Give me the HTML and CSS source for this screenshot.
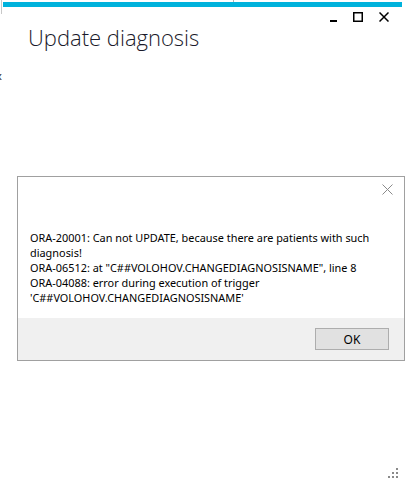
FILE: index.html
```html
<!DOCTYPE html>
<html>
<head>
<meta charset="utf-8">
<link rel="stylesheet" href="styles.css">
</head>
<body>
<div class="window">
  <div class="accent-row"><div class="accent"><span class="tick"></span></div></div>
  <div class="controls">
    <svg class="ctl" width="10" height="10" viewBox="0 0 10 10"><rect x="1" y="8" width="7" height="2" fill="#000"/></svg>
    <svg class="ctl" width="10" height="10" viewBox="0 0 10 10"><rect x="0.75" y="0.75" width="8.5" height="8.5" fill="none" stroke="#000" stroke-width="1.5"/></svg>
    <svg class="ctl" width="10" height="10" viewBox="0 0 10 10"><path d="M0.5 0.5 L9.5 9.5 M9.5 0.5 L0.5 9.5" stroke="#000" stroke-width="1.5"/></svg>
  </div>
  <h1 class="title">Update diagnosis</h1>
  <div class="stray">x</div>
  <div class="dialog">
    <div class="dialog-body">
      <div class="dialog-close">
        <svg width="11" height="11" viewBox="0 0 11 11"><path d="M0.5 0.5 L10.5 10.5 M10.5 0.5 L0.5 10.5" stroke="#8a8a8a" stroke-width="1"/></svg>
      </div>
      <p class="message">ORA-20001: Can not UPDATE, because there are patients with such diagnosis!<br>ORA-06512: at "C##VOLOHOV.CHANGEDIAGNOSISNAME", line 8<br>ORA-04088: error during execution of trigger<br>'C##VOLOHOV.CHANGEDIAGNOSISNAME'</p>
    </div>
    <div class="dialog-footer">
      <button class="btn">OK</button>
    </div>
  </div>
  <div class="grip">
    <svg width="10" height="10" viewBox="0 0 10 10" fill="#8a8a8a">
      <rect x="8" y="0" width="2" height="2"/>
      <rect x="4" y="4" width="2" height="2"/><rect x="8" y="4" width="2" height="2"/>
      <rect x="0" y="8" width="2" height="2"/><rect x="4" y="8" width="2" height="2"/><rect x="8" y="8" width="2" height="2"/>
    </svg>
  </div>
</div>
</body>
</html>
```
FILE: styles.css
```css
html, body {
  margin: 0;
  padding: 0;
  background: #fff;
}
.window {
  height: 487px;
  display: flex;
  flex-direction: column;
  font-family: "Noto Sans", "Open Sans", sans-serif;
}
.accent-row {
  margin-left: 1px;
  padding: 2px 3px 7px 1px;
  border-left: 1px solid #c8c8c8;
}
.accent {
  height: 5px;
  background: #00b2dc;
  position: relative;
}
.tick {
  position: absolute;
  left: 230px;
  top: -2px;
  width: 1px;
  height: 2px;
  background: #b0b0b0;
}
.controls {
  display: flex;
  justify-content: flex-end;
  align-items: flex-start;
  gap: 14px;
  padding-right: 16px;
  margin-top: -2px;
}
.ctl:last-child {
  margin-left: 2px;
}
.title {
  margin: 0 0 0 28px;
  font-family: "Open Sans", sans-serif;
  font-weight: 300;
  font-size: 22px;
  line-height: 30px;
  color: #1a1a2a;
}
.stray {
  margin: 18px 0 0 -4px;
  font-size: 11px;
  line-height: 12px;
  color: #222;
}
.dialog {
  margin: 94px 0 0 17px;
  border: 1px solid #a0a0a0;
  display: flex;
  flex-direction: column;
}
.dialog-body {
  height: 141px;
  background: #fff;
  display: flex;
  flex-direction: column;
}
.dialog-close {
  display: flex;
  justify-content: flex-end;
  padding: 7px 11px 0 0;
  height: 11px;
}
.message {
  margin: 35px 0 0 12px;
  width: 352px;
  font-family: "Noto Sans", sans-serif;
  font-size: 10.9px;
  line-height: 15px;
  color: #000;
}
.dialog-footer {
  height: 42px;
  background: #f0f0f0;
  display: flex;
  justify-content: flex-end;
  align-items: flex-start;
  padding-right: 15px;
}
.btn {
  margin-top: 10px;
  width: 74px;
  height: 22px;
  border: 1px solid #adadad;
  background: #e1e1e1;
  font-family: "Noto Sans", sans-serif;
  font-size: 12px;
  color: #000;
  padding: 0;
}
.grip {
  margin-top: auto;
  display: flex;
  justify-content: flex-end;
  padding: 0 7px 9px 0;
}
.grip svg {
  display: block;
}
```
